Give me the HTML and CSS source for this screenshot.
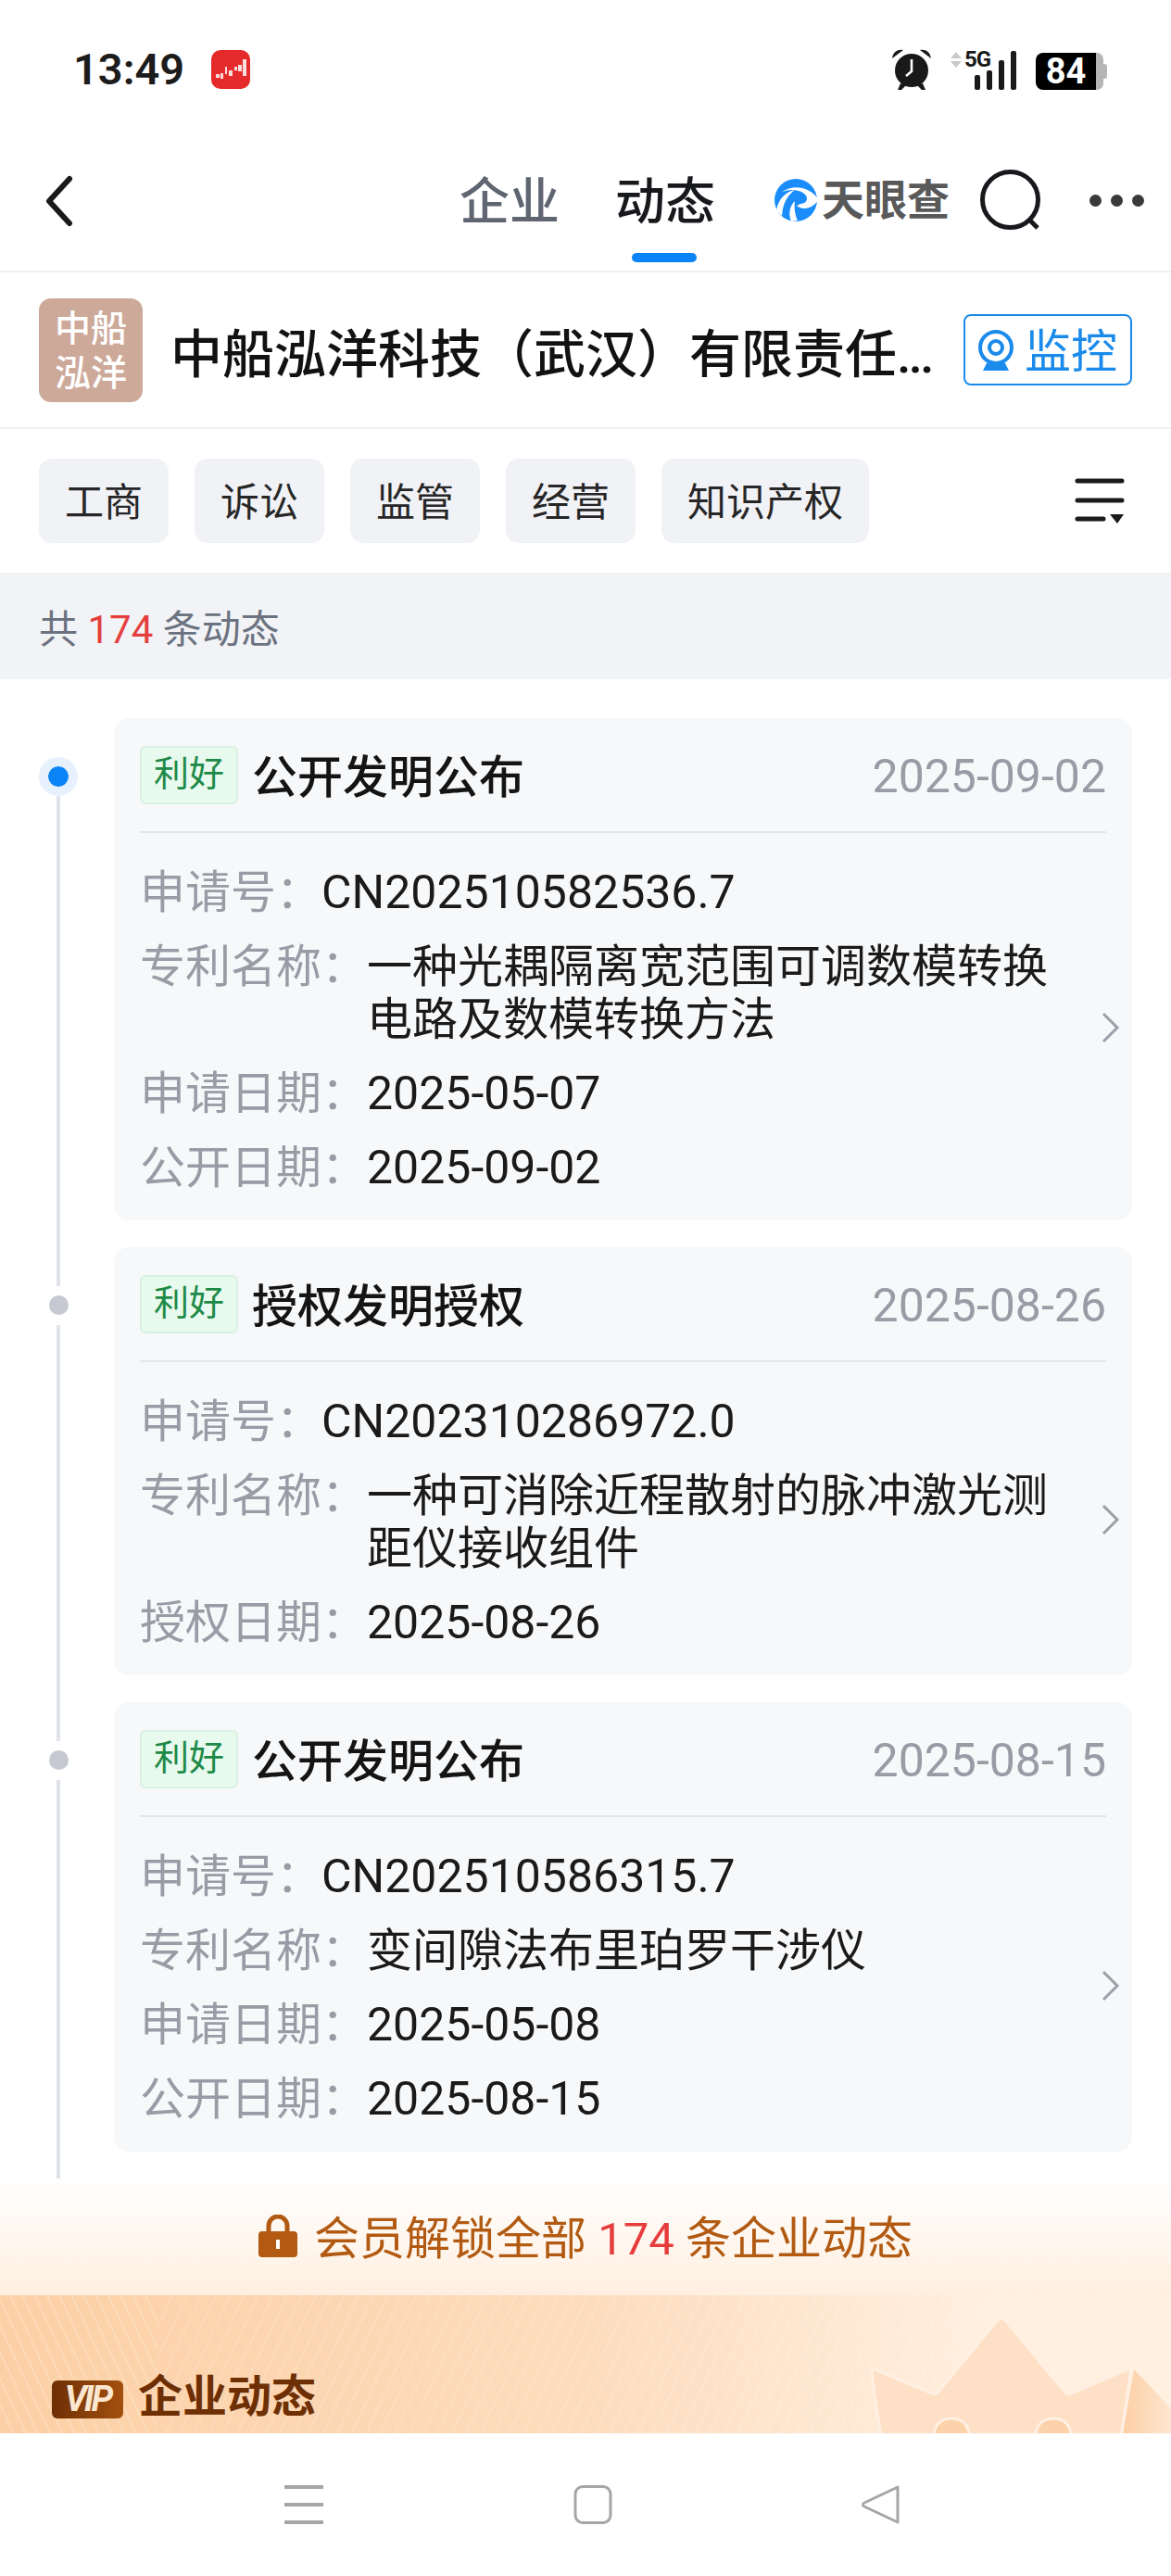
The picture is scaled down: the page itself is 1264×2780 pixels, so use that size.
FILE: index.html
```html
<!DOCTYPE html>
<html lang="zh-CN">
<head>
    <meta charset="UTF-8">
    <meta name="viewport" content="width=device-width, initial-scale=1.0">
    <title>企业动态</title>
    <link rel="stylesheet" href="styles.css">
</head>
<body>
    <div class="page">
        <div class="status-bar">
            <span class="clock">13:49</span>
            <svg class="app-badge" viewBox="0 0 42 42">
                <rect width="42" height="42" rx="10" fill="#e42a2a"/>
                <path d="M5 26h4v4H5zM10 25h3v6h-3zM15 18h2v8h-2zM19 22h4v6h-4zM25 18h3v4h-3zM29 16h4v7h-4zM34 10h4v18h-4z" fill="#fbdede"/>
            </svg>
            <div class="status-icons">
                <svg class="alarm" viewBox="0 0 42 44">
                    <circle cx="21" cy="23" r="18" fill="#191919"/>
                    <path d="M0 10C1 3 6 0 12 1zM42 10C41 3 36 0 30 1zM9 37l-3 7h4l5-5zM33 37l3 7h-4l-5-5z" fill="#191919"/>
                    <path d="M21 11v13l-6 5" stroke="#fff" stroke-width="2.600" fill="none"/>
                </svg>
                <div class="signal">
                    <svg class="updown" viewBox="0 0 12 18"><path d="M6 0l6 7H0zM0 10h12l-6 7z" fill="#c9c9c9"/></svg>
                    <span class="five-g">5G</span>
                    <div class="bars">
                        <i class="bar bar-1"></i>
                        <i class="bar bar-2"></i>
                        <i class="bar bar-3"></i>
                        <i class="bar bar-4"></i>
                    </div>
                </div>
                <div class="battery"><span class="battery-level">84</span><i class="battery-rest"></i><i class="battery-nub"></i></div>
            </div>
        </div>

        <div class="nav">
            <svg class="back" viewBox="0 0 32 56"><path d="M27 4L5 28l22 24" fill="none" stroke="#1a1a1a" stroke-width="6" stroke-linecap="round" stroke-linejoin="round"/></svg>
            <div class="nav-tabs">
                <span class="nav-tab">企业</span>
                <span class="nav-tab nav-tab-active">动态</span>
            </div>
            <div class="brand">
                <svg class="brand-mark" viewBox="0 0 46 46">
                    <circle cx="23" cy="23" r="23" fill="#1a8dfb"/>
                    <path d="M46 20C36 8 20 6 8 14 18 10 30 12 34 18c3 5-1 9-6 9l-4 2c6 5 15 4 22-4zM2 34C4 22 12 14 22 12 14 18 9 26 8 40zM18 46c-3-8-2-16 4-22-1 7 0 15 3 21z" fill="#fff"/>
                </svg>
                <span class="brand-name">天眼查</span>
            </div>
            <svg class="search" viewBox="0 0 66 66"><circle cx="32.500" cy="32.500" r="30" fill="none" stroke="#17191c" stroke-width="5"/><path d="M54 55l8 8" stroke="#17191c" stroke-width="5"/></svg>
            <div class="more"><i></i><i></i><i></i></div>
        </div>

        <div class="company">
            <div class="company-logo">中船<br>泓洋</div>
            <div class="company-name">中船泓洋科技（武汉）有限责任<span class="ellipsis">...</span></div>
            <div class="monitor">
                <svg class="monitor-icon" viewBox="0 0 38 44">
                    <circle cx="19" cy="19" r="17" fill="none" stroke="#1a8bea" stroke-width="4"/>
                    <circle cx="19" cy="19" r="7" fill="none" stroke="#1a8bea" stroke-width="4"/>
                    <path d="M5 44h28l-4-8H9z" fill="#1a8bea"/>
                </svg>
                <span class="monitor-text">监控</span>
            </div>
        </div>

        <div class="filters">
            <span class="filter">工商</span>
            <span class="filter">诉讼</span>
            <span class="filter">监管</span>
            <span class="filter">经营</span>
            <span class="filter">知识产权</span>
            <svg class="filter-menu" viewBox="0 0 54 50">
                <path d="M3 3h48M3 24h48M3 44h28" stroke="#1b1b1b" stroke-width="5" stroke-linecap="round"/>
                <path d="M38 39h15l-7 10z" fill="#1b1b1b"/>
            </svg>
        </div>

        <div class="count-bar">共 <em>174</em> 条动态</div>

        <div class="timeline">
            <div class="item">
                <div class="rail"><i class="dot dot-active"></i><i class="line"></i></div>
                <div class="card">
                    <div class="card-head">
                        <span class="tag">利好</span>
                        <span class="card-title">公开发明公布</span>
                        <span class="card-date">2025-09-02</span>
                    </div>
                    <div class="card-body">
                        <div class="rows">
                            <div class="row"><span class="label">申请号：</span><span class="value num">CN202510582536.7</span></div>
                            <div class="row"><span class="label">专利名称：</span><span class="value">一种光耦隔离宽范围可调数模转换电路及数模转换方法</span></div>
                            <div class="row"><span class="label">申请日期：</span><span class="value num">2025-05-07</span></div>
                            <div class="row"><span class="label">公开日期：</span><span class="value num">2025-09-02</span></div>
                        </div>
                        <svg class="chevron" viewBox="0 0 22 36"><path d="M3 3l15 15L3 33" fill="none" stroke="#9aa0a8" stroke-width="3"/></svg>
                    </div>
                </div>
            </div>
            <div class="item">
                <div class="rail"><i class="dot"></i><i class="line"></i></div>
                <div class="card">
                    <div class="card-head">
                        <span class="tag">利好</span>
                        <span class="card-title">授权发明授权</span>
                        <span class="card-date">2025-08-26</span>
                    </div>
                    <div class="card-body">
                        <div class="rows">
                            <div class="row"><span class="label">申请号：</span><span class="value num">CN202310286972.0</span></div>
                            <div class="row"><span class="label">专利名称：</span><span class="value">一种可消除近程散射的脉冲激光测距仪接收组件</span></div>
                            <div class="row"><span class="label">授权日期：</span><span class="value num">2025-08-26</span></div>
                        </div>
                        <svg class="chevron" viewBox="0 0 22 36"><path d="M3 3l15 15L3 33" fill="none" stroke="#9aa0a8" stroke-width="3"/></svg>
                    </div>
                </div>
            </div>
            <div class="item item-last">
                <div class="rail"><i class="dot"></i><i class="line"></i></div>
                <div class="card">
                    <div class="card-head">
                        <span class="tag">利好</span>
                        <span class="card-title">公开发明公布</span>
                        <span class="card-date">2025-08-15</span>
                    </div>
                    <div class="card-body">
                        <div class="rows">
                            <div class="row"><span class="label">申请号：</span><span class="value num">CN202510586315.7</span></div>
                            <div class="row"><span class="label">专利名称：</span><span class="value">变间隙法布里珀罗干涉仪</span></div>
                            <div class="row"><span class="label">申请日期：</span><span class="value num">2025-05-08</span></div>
                            <div class="row"><span class="label">公开日期：</span><span class="value num">2025-08-15</span></div>
                        </div>
                        <svg class="chevron" viewBox="0 0 22 36"><path d="M3 3l15 15L3 33" fill="none" stroke="#9aa0a8" stroke-width="3"/></svg>
                    </div>
                </div>
            </div>
        </div>

        <div class="unlock">
            <svg class="lock" viewBox="0 0 42 46">
                <path d="M11 20v-8a10 10 0 0 1 20 0v8" fill="none" stroke="#b25a12" stroke-width="5"/>
                <rect x="0" y="18" width="42" height="28" rx="4" fill="#b25a12"/>
                <rect x="19" y="27" width="4" height="10" fill="#fff"/>
            </svg>
            <span class="unlock-text">会员解锁全部 <em>174</em> 条企业动态</span>
        </div>

        <div class="vip-banner">
            <svg class="crown" viewBox="0 0 380 149">
                <defs>
                    <linearGradient id="crown-shadow" x1="0" y1="0" x2="1" y2="0">
                        <stop offset="0" stop-color="#fccfa5"/>
                        <stop offset="1" stop-color="#fee6cf"/>
                    </linearGradient>
                </defs>
                <path d="M340 80l40 42v27h-52z" fill="url(#crown-shadow)"/>
                <path d="M68 160L57 86c-1-5 2-7 6-5l59 25c3 1 5 1 7-2l63-76c3-3 7-3 10 0l63 76c2 3 4 3 7 2l59-25c4-2 6 0 5 5l-11 74z" fill="#fee0c6" stroke="#fff0e3" stroke-width="3" stroke-linejoin="round"/>
                <path d="M124 152c0-12 8-19 19-19s19 7 19 19zM234 152c0-12 8-19 19-19s19 7 19 19z" fill="#fcd2ab" stroke="#fff0e3" stroke-width="3"/>
            </svg>
            <div class="vip-title">
                <span class="vip-badge">VIP</span>
                <span class="vip-text">企业动态</span>
            </div>
        </div>

        <div class="system-nav">
            <svg class="sys-icon" viewBox="0 0 44 42"><path d="M1 2h42M1 21h42M1 40h42" stroke="#a6a6a6" stroke-width="4"/></svg>
            <svg class="sys-icon" viewBox="0 0 44 42"><rect x="3" y="1.500" width="38" height="39" rx="8" fill="none" stroke="#a6a6a6" stroke-width="3"/></svg>
            <svg class="sys-icon" viewBox="0 0 44 42"><path d="M40 2v38L4 23c-2-1-2-3 0-4z" fill="none" stroke="#a6a6a6" stroke-width="3" stroke-linejoin="round"/></svg>
        </div>
    </div>
</body>
</html>
```

FILE: styles.css
```css
* {
    box-sizing: border-box;
}

body {
    margin: 0;
    background-color: #fff;
    font-family: Roboto, "Noto Sans CJK SC", sans-serif;
    color: #1a1a1a;
}

.page {
    width: 1264px;
    height: 2780px;
    overflow: hidden;
    display: flex;
    flex-direction: column;
}

em {
    font-style: normal;
}

/* status bar */
.status-bar {
    height: 144px;
    flex: none;
    padding: 54px 69px 0 79px;
    display: flex;
    align-items: flex-start;
}

.clock {
    font-size: 47px;
    font-weight: 600;
    line-height: 42px;
    color: #1c1c1c;
}

.app-badge {
    width: 42px;
    height: 42px;
    margin-left: 29px;
}

.status-icons {
    margin-left: auto;
    margin-top: -1px;
    display: flex;
    align-items: flex-end;
}

.alarm {
    width: 42px;
    height: 44px;
}

.signal {
    position: relative;
    width: 71px;
    height: 42px;
    margin-left: 21px;
}

.updown {
    position: absolute;
    left: 0;
    top: 1px;
    width: 12px;
    height: 18px;
}

.five-g {
    position: absolute;
    left: 15px;
    top: -2px;
    font-size: 24px;
    font-weight: 700;
    line-height: 22px;
    letter-spacing: -1px;
}

.bars {
    position: absolute;
    right: 0;
    bottom: 0;
    display: flex;
    align-items: flex-end;
    gap: 7px;
}

.bar {
    width: 6px;
    border-radius: 2px;
    background-color: #1a1a1a;
}

.bar-1 { height: 16px; }
.bar-2 { height: 21px; }
.bar-3 { height: 32px; }
.bar-4 { height: 42px; }

.battery {
    display: flex;
    align-items: center;
    margin-left: 21px;
}

.battery-level {
    width: 65px;
    height: 40px;
    border-radius: 8px 0 0 8px;
    background-color: #000;
    color: #fff;
    font-size: 38px;
    font-weight: 700;
    line-height: 41px;
    text-align: center;
}

.battery-rest {
    width: 8px;
    height: 40px;
    border-radius: 0 7px 7px 0;
    background-color: #b5b5b5;
}

.battery-nub {
    width: 4px;
    height: 16px;
    border-radius: 0 3px 3px 0;
    background-color: #b5b5b5;
}

/* top nav */
.nav {
    height: 150px;
    flex: none;
    padding: 0 29px 0 48px;
    border-bottom: 2px solid #f0f0f0;
    display: flex;
    align-items: flex-start;
}

.back {
    width: 32px;
    height: 56px;
    margin-top: 45px;
}

.nav-tabs {
    margin-left: 416px;
    display: flex;
    gap: 60px;
}

.nav-tab {
    position: relative;
    height: 139px;
    font-size: 54px;
    font-weight: 500;
    line-height: 150px;
    color: #5f6672;
}

.nav-tab-active {
    color: #17191c;
}

.nav-tab-active::after {
    content: "";
    position: absolute;
    left: 18px;
    width: 70px;
    bottom: 0;
    height: 10px;
    border-radius: 5px;
    background-color: #0a84f6;
}

.brand {
    margin-left: 64px;
    margin-top: 49px;
    display: flex;
    align-items: center;
    gap: 5px;
}

.brand-mark {
    width: 46px;
    height: 46px;
}

.brand-name {
    font-size: 46px;
    font-weight: 700;
    line-height: 46px;
    color: #595959;
}

.search {
    width: 66px;
    height: 66px;
    margin-left: 33px;
    margin-top: 39px;
}

.more {
    margin-left: auto;
    margin-top: 66px;
    display: flex;
    gap: 10px;
}

.more i {
    width: 13px;
    height: 13px;
    border-radius: 50%;
    background-color: #3a3a3a;
}

/* company header */
.company {
    height: 169px;
    flex: none;
    padding: 28px 42px 0;
    border-bottom: 2px solid #f0f0f0;
    display: flex;
    align-items: flex-start;
}

.company-logo {
    width: 112px;
    height: 112px;
    flex: none;
    padding-top: 9px;
    border-radius: 13px;
    background-color: #cda99a;
    color: #fff;
    font-size: 39px;
    font-weight: 500;
    line-height: 48px;
    text-align: center;
}

.company-name {
    margin-left: 30px;
    height: 112px;
    font-size: 56px;
    font-weight: 500;
    line-height: 122px;
    white-space: nowrap;
    color: #121212;
}

.ellipsis {
    letter-spacing: -3px;
}

.monitor {
    width: 182px;
    height: 77px;
    margin: 17px 0 0 auto;
    border: 2px solid #1a8bea;
    border-radius: 8px;
    display: flex;
    align-items: center;
    justify-content: center;
    gap: 12px;
    color: #1a8bea;
    font-size: 50px;
}

.monitor-icon {
    width: 38px;
    height: 44px;
}

.monitor-text {
    padding-top: 4px;
    line-height: 70px;
}

/* filter chips */
.filters {
    height: 155px;
    flex: none;
    padding: 32px 50px 0 42px;
    display: flex;
    align-items: flex-start;
    gap: 28px;
}

.filter {
    height: 91px;
    padding: 0 28px;
    border-radius: 14px;
    background-color: #f1f2f6;
    font-size: 42px;
    line-height: 95px;
    color: #262626;
}

.filter-menu {
    width: 54px;
    height: 50px;
    margin: 21px 0 0 auto;
}

/* count bar */
.count-bar {
    height: 115px;
    flex: none;
    padding-left: 42px;
    background-color: #f2f3f6;
    font-size: 42px;
    line-height: 124px;
    color: #6b7280;
}

.count-bar em {
    color: #e53e3e;
}

/* timeline */
.timeline {
    padding: 42px 42px 0 0;
}

.item {
    display: flex;
    padding-bottom: 29px;
}

.rail {
    width: 123px;
    flex: none;
    padding-left: 3px;
    display: flex;
    flex-direction: column;
    align-items: center;
}

.dot {
    width: 21px;
    height: 21px;
    margin-top: 52px;
    border-radius: 50%;
    background-color: #c6c9d1;
}

.dot-active {
    width: 42px;
    height: 42px;
    margin-top: 42px;
    border: 10px solid #e6f1fd;
    background-color: #0a84f6;
    background-clip: padding-box;
}

.line {
    width: 4px;
    flex: 1;
    margin-top: 11px;
    margin-bottom: -71px;
    background-color: #dfe3e9;
}

.dot-active + .line {
    margin-top: 0;
}

.item-last .line {
    margin-bottom: -29px;
}

.card {
    flex: 1;
    padding: 0 28px 28px;
    border-radius: 16px;
    background-color: #f7f8fa;
}

.card-head {
    height: 124px;
    border-bottom: 2px solid #e4e5ea;
    display: flex;
    align-items: center;
}

.tag {
    width: 106px;
    height: 63px;
    border: 2px solid #d7f2e0;
    border-radius: 6px;
    background-color: #e8f9ee;
    color: #1d8a47;
    font-size: 38px;
    line-height: 56px;
    text-align: center;
}

.card-title {
    margin-left: 15px;
    padding-bottom: 3px;
    font-size: 49px;
    font-weight: 500;
    color: #141414;
}

.card-date {
    margin-left: auto;
    padding-top: 3px;
    font-size: 50px;
    color: #979ca5;
}

.card-body {
    display: flex;
    align-items: center;
    padding-top: 36px;
}

.rows {
    flex: 1;
}

.row {
    display: flex;
    align-items: baseline;
    font-size: 49px;
    line-height: 57px;
    margin-bottom: 23px;
}

.row:last-child {
    margin-bottom: 0;
}

.label {
    flex: none;
    color: #979ca5;
}

.value {
    width: 760px;
    color: #1a1a1a;
}

.num {
    font-size: 50px;
}

.chevron {
    width: 22px;
    height: 36px;
    flex: none;
    margin: -6px -16px 0 0;
}

/* unlock strip */
.unlock {
    height: 126px;
    flex: none;
    margin-top: auto;
    background: linear-gradient(180deg, #ffffff 0%, #ffefe0 100%);
    display: flex;
    align-items: center;
    justify-content: center;
    gap: 18px;
    font-size: 49px;
    color: #b25a12;
}

.unlock em {
    color: #e63c3c;
}

.unlock-text {
    padding-bottom: 6px;
}

.lock {
    width: 42px;
    height: 46px;
    margin-bottom: 2px;
}

.vip-banner {
    position: relative;
    height: 149px;
    flex: none;
    overflow: hidden;
    padding: 87px 0 0 56px;
    background:
        repeating-linear-gradient(115deg, rgba(255,255,255,.14) 0 2px, transparent 2px 14px),
        linear-gradient(90deg, #fcd0a6 0%, #fddcbd 50%, #fff0e0 85%);
}

.vip-banner::before {
    content: "";
    position: absolute;
    left: 0;
    top: 0;
    width: 170px;
    height: 100%;
    background: linear-gradient(90deg, #fcd0a6 0%, #fcd3ab 100%);
}

.vip-banner::after {
    content: "";
    position: absolute;
    left: 0;
    top: 0;
    width: 170px;
    height: 100%;
    background: repeating-linear-gradient(65deg, rgba(255,255,255,.2) 0 2px, transparent 2px 12px);
}

.crown {
    position: absolute;
    right: 0;
    top: 0;
    width: 380px;
    height: 149px;
}

.vip-title {
    position: relative;
    z-index: 1;
    display: flex;
    align-items: center;
    gap: 16px;
}

.vip-badge {
    width: 77px;
    height: 41px;
    border-radius: 6px;
    background: linear-gradient(90deg, #6f2f04, #a3500f);
    color: #fbe6d0;
    font-size: 38px;
    font-weight: 700;
    font-style: italic;
    line-height: 41px;
    text-align: center;
    letter-spacing: -3px;
}

.vip-text {
    margin-bottom: 4px;
    font-size: 48px;
    font-weight: 700;
    line-height: 46px;
    color: #6f2f04;
}

/* android nav */
.system-nav {
    height: 154px;
    flex: none;
    padding: 0 291px 0 306px;
    display: flex;
    align-items: center;
    justify-content: space-between;
}

.sys-icon {
    width: 44px;
    height: 42px;
}
```
